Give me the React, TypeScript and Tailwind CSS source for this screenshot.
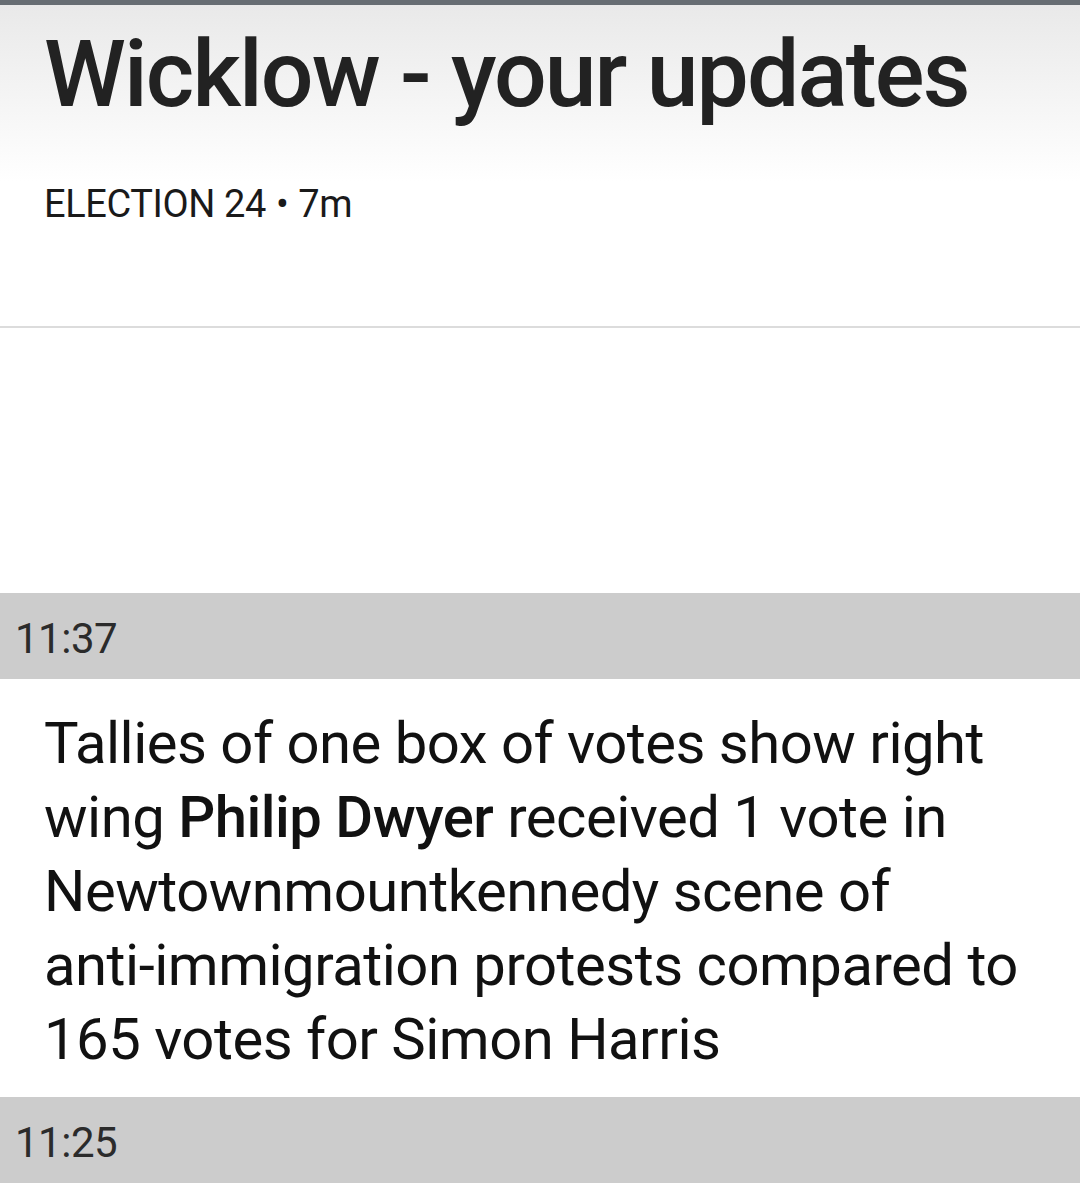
const font = { fontFamily: "Roboto, 'Liberation Sans', sans-serif" };

function TimeBar({ time }: { time: string }) {
  return (
    <div className="h-[86px] bg-[#cccccc] pl-[15px] pt-[25px]">
      <span className="block text-[42px] leading-none text-[#2b2b2b] tracking-[-0.5px]">{time}</span>
    </div>
  );
}

export default function App() {
  return (
    <div className="w-[1080px] h-[1190px] overflow-hidden bg-white" style={font}>
      <div className="h-[5px] bg-[#676d73]" />

      <header className="bg-gradient-to-b from-[#e9e9e9] to-white to-[55%] px-[44px] pt-[23px] h-[321px]">
        <h1 className="text-[93px] leading-none font-medium text-[#222222] tracking-[-1.9px]">
          Wicklow - your updates
        </h1>
        <p className="mt-[64px] text-[38px] leading-none text-[#1a1a1a] tracking-[-0.4px]">
          ELECTION 24 <span className="mx-[1px]">•</span> 7m
        </p>
      </header>

      <div className="h-[2px] bg-[#dcdcdc]" />

      <div className="h-[265px]" />

      <TimeBar time="11:37" />

      <p className="px-[44px] pt-[27px] pb-[21px] text-[58px] leading-[74px] text-[#111111] tracking-[-0.5px]">
        Tallies of one box of votes show right wing{" "}
        <span className="font-medium">Philip Dwyer</span> received 1 vote in
        Newtownmountkennedy scene of{" "}
        <span className="whitespace-nowrap">anti-immigration</span> protests
        compared to 165 votes for Simon Harris
      </p>

      <TimeBar time="11:25" />
    </div>
  );
}
